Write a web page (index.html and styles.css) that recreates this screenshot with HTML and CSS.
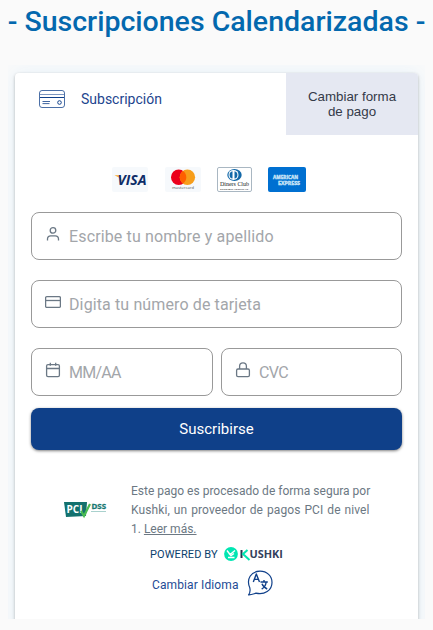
FILE: index.html
```html
<!DOCTYPE html>
<html lang="es">
<head>
<meta charset="utf-8">
<title>Suscripciones Calendarizadas</title>
<link rel="stylesheet" href="styles.css">
</head>
<body>
<h1><span>- Suscripciones Calendarizadas -</span></h1>
<main class="frame">
<section class="card">
  <header class="tabs">
    <div class="tab">
      <svg width="26" height="18" viewBox="0 0 26 18" fill="none" stroke="#10408a"><rect x=".5" y=".5" width="25" height="17" rx="2.5" stroke-opacity=".75"/><path d="M1 4.5h24" stroke-opacity=".55"/><path d="M1 7.5h24"/><path d="M3.5 11.5h7.5M3.5 13.6h7" stroke-opacity=".8"/><circle cx="20.5" cy="12.5" r="1.8"/></svg>
      <span class="tab-label">Subscripción</span>
    </div>
    <button class="switch">Cambiar forma<br>de pago</button>
  </header>
  <div class="brands">
    <svg width="36" height="25" viewBox="0 0 36 25"><rect width="36" height="25" rx="2" fill="#f6f9fc"/><path d="M2.5 8.2h4.8l3 6.5-3.8-4.5z" fill="#f7a823"/><text x="5.5" y="17.8" font-size="13.5" font-weight="700" font-style="italic" textLength="29" lengthAdjust="spacingAndGlyphs" fill="#0e2d68">VISA</text></svg>
    <svg width="36" height="25" viewBox="0 0 36 25"><rect width="36" height="25" rx="2" fill="#f6f9fc"/><circle cx="13.7" cy="10.3" r="7.7" fill="#eb001b"/><circle cx="22.4" cy="10.3" r="7.7" fill="#f79e1b"/><path d="M18.05 4a7.7 7.7 0 0 1 0 12.6a7.7 7.7 0 0 1 0-12.6" fill="#ff5f00"/><text x="7" y="21.8" font-size="4.3" textLength="22" lengthAdjust="spacingAndGlyphs" fill="#555">mastercard</text></svg>
    <svg width="35" height="25" viewBox="0 0 35 25"><rect x=".5" y=".5" width="34" height="24" rx="1.5" fill="#fff" stroke="#a9b7c2"/><ellipse cx="17.5" cy="7.9" rx="7.2" ry="6" fill="#1268a8"/><circle cx="16.5" cy="7.9" r="5" fill="#fff"/><path d="M15.5 4.2a3.8 3.8 0 0 0 0 7.4zM17.5 4.2a3.8 3.8 0 0 1 0 7.4z" fill="#1268a8"/><text class="diners" x="3" y="19.4" font-size="6.6" textLength="29" lengthAdjust="spacingAndGlyphs" fill="#222">Diners Club</text><text class="diners" x="3" y="22.9" font-size="2.7" font-weight="700" textLength="29" lengthAdjust="spacingAndGlyphs" fill="#222">INTERNATIONAL</text></svg>
    <svg width="38" height="25" viewBox="0 0 38 25"><rect width="38" height="25" rx="2" fill="#0070d1"/><g fill="#c9e4f7" stroke="#c9e4f7" stroke-width=".4" font-size="5.2" font-weight="700"><text x="5" y="11.7" textLength="25" lengthAdjust="spacingAndGlyphs">AMERICAN</text><text x="10" y="17.6" textLength="22" lengthAdjust="spacingAndGlyphs">EXPRESS</text></g></svg>
  </div>
  <form class="form">
    <label class="field"><svg width="16" height="16" viewBox="0 0 16 16" class="icon"><circle cx="8" cy="4.4" r="2.8"/><path d="M2.5 14.5v-1.4c0-1.8 1.4-3.2 3.2-3.2h4.6c1.8 0 3.2 1.4 3.2 3.2v1.4"/></svg><span class="ph-name">Escribe tu nombre y apellido</span></label>
    <label class="field"><svg width="16" height="16" viewBox="0 0 16 16" class="icon"><rect x=".6" y="2.6" width="14.8" height="10.8" rx="1.2"/><path d="M.6 6.5h14.8"/></svg><span class="ph-card">Digita tu número de tarjeta</span></label>
    <div class="pair">
      <label class="field"><svg width="16" height="16" viewBox="0 0 16 16" class="icon"><rect x="1.6" y="2.6" width="12.8" height="12" rx="1.4"/><path d="M1.6 6.5h12.8M5.3.8v3M10.7.8v3"/></svg><span class="ph-date">MM/AA</span></label>
      <label class="field"><svg width="16" height="16" viewBox="0 0 16 16" class="icon"><rect x="1.6" y="7" width="12.8" height="7.6" rx="1.4"/><path d="M4.6 7V4.2a3.4 3.4 0 0 1 6.8 0V7"/></svg><span class="ph-cvc">CVC</span></label>
    </div>
    <button type="button" class="submit"><span>Suscribirse</span></button>
  </form>
  <div class="notice">
    <svg class="pci" width="44" height="20" viewBox="0 0 44 20"><path d="M0 3h23l-1 14-20 1z" fill="#13716e"/><text x="2.5" y="14.3" font-size="10.5" font-weight="700" textLength="16" lengthAdjust="spacingAndGlyphs" fill="#fff">PCI</text><path d="M17 12l3 5 6-12" fill="none" stroke="#4bbd52" stroke-width="2.2"/><text x="27.5" y="10" font-size="6.6" font-weight="700" textLength="14.5" lengthAdjust="spacingAndGlyphs" fill="#187873" stroke="#187873" stroke-width=".3">DSS</text><path d="M27 12.5h15" stroke="#a9d1cd"/></svg>
    <p><span class="l1">Este pago es procesado de forma segura por</span><br><span class="l2">Kushki, un proveedor de pagos PCI de nivel</span><br><span class="l3">1. <u>Leer más.</u></span></p>
  </div>
  <div class="powered"><span>POWERED BY</span>
    <svg width="60" height="16" viewBox="0 0 60 16"><circle cx="7" cy="8" r="6.9" fill="#00e6b2"/><path d="M3 4.5l3 4 5-4M4 11.5h6.5M5 7.5l2 2 3-2" fill="none" stroke="#fff" stroke-width="1.4"/><path d="M17.5 4v8" stroke="#25364f" stroke-width="2"/><path d="M23.5 4L19 8l6.5 6" fill="none" stroke="#00e6b2" stroke-width="2"/><text x="25.5" y="12" font-size="11" font-weight="700" textLength="33.5" lengthAdjust="spacingAndGlyphs" fill="#33415c">USHKI</text></svg>
  </div>
  <div class="language"><span>Cambiar Idioma</span>
    <svg width="26" height="26" viewBox="0 0 26 26" fill="none" stroke="#10408a" stroke-width="1.2" stroke-linejoin="round"><path d="M2.8 17.8C-1 9 4 1.3 13 1.2c7 0 12 4.9 12 11.2 0 8-7.5 12.8-16 10.8-2 .5-4.5 1.8-7.5 1.6 1.7-1.8 1.8-4.6 1.3-7z"/><path d="M6.3 12l3-8 3.2 8M7.4 9.4h4M13.5 12h7.3M17 10v2M14.7 19c2.6-1.2 4-3.7 4.5-7M15 13.8c.8 2.2 2.5 4 5.2 5.2" stroke-width="1.4"/></svg>
  </div>
</section>
</main>
</body>
</html>
```
FILE: styles.css
```css
* { box-sizing: border-box; }
body { margin: 0; background: #fafafa; font-family: Roboto, "Noto Sans", sans-serif; }
svg { display: block; flex: none; }
svg text { font-family: "Open Sans", sans-serif; }
svg .diners { font-family: "Liberation Serif", serif; }
span { white-space: nowrap; }
h1 { margin: 0; height: 65px; text-align: center; font-size: 28.5px; font-weight: 500; line-height: 43px; color: #0368ae; letter-spacing: 0; white-space: nowrap; }
.frame { height: 554px; margin: 0 8px; padding: 8px 7px 0; overflow: hidden; }
.card { height: 580px; border-radius: 4px; background: #fff; box-shadow: 0 1px 3px rgba(0,0,0,.2), 0 2px 5px rgba(0,0,0,.08), 0 0 20px 2px #e9f3fa; }
.tabs { display: flex; height: 62px; }
.tab { flex: 1; display: flex; align-items: flex-start; padding: 17px 0 0 24px; color: #1d458e; font-size: 14px; }
.tab-label { margin-left: 16px; line-height: 18px; }
.switch { width: 132px; border: 0; border-radius: 0 4px 0 0; padding: 0 0 1px; background: #e5e8f2; color: #343a48; font: 13.33px/15px "Liberation Sans", Arial, sans-serif; }
.brands { display: flex; padding: 32px 0 0 97px; height: 77px; gap: 17px; }
.brands svg:nth-child(3) { margin-left: -1px; }
.brands svg:nth-child(4) { margin-left: -1px; }
.form { padding: 0 16px; display: flex; flex-direction: column; gap: 20px; }
.field { display: flex; height: 48px; border: 1px solid #999; border-radius: 8px; padding: 0 13px; color: #a3a6aa; font-size: 16px; }
.icon { margin-top: 13px; margin-right: 8px; fill: none; stroke: #6b7885; stroke-width: 1.3; }
.field span { line-height: 47px; }
.ph-name { letter-spacing: .14px; }
.ph-card { letter-spacing: .12px; }
.ph-date { letter-spacing: -.75px; }
.ph-cvc { letter-spacing: -.6px; }
.pair { display: grid; grid-template-columns: 182px 181px; gap: 8px; }
.submit { height: 42px; margin-top: -8px; border: 0; border-radius: 8px; background: #0f4089; box-shadow: 0 1px 3px rgba(0,0,0,.5); color: #fff; font: 15px Roboto, sans-serif; }
.notice { display: flex; margin-top: 32px; padding-left: 49px; color: #6c7883; }
.pci { margin: 17px 23px 0 0; }
.notice p { margin: 0; font-size: 12px; line-height: 19px; }
.l2 { letter-spacing: .12px; word-spacing: .75px; }
.powered { display: flex; align-items: center; height: 16px; margin: 7px 0 0 135px; gap: 6px; color: #0b416d; font-size: 11px; }
.powered span { letter-spacing: .1px; }
.language { display: flex; align-items: center; height: 26px; margin: 8px 0 0 137px; gap: 8px; color: #244b95; font-size: 12px; letter-spacing: .12px; }
.language span { padding-top: 4px; }
```
